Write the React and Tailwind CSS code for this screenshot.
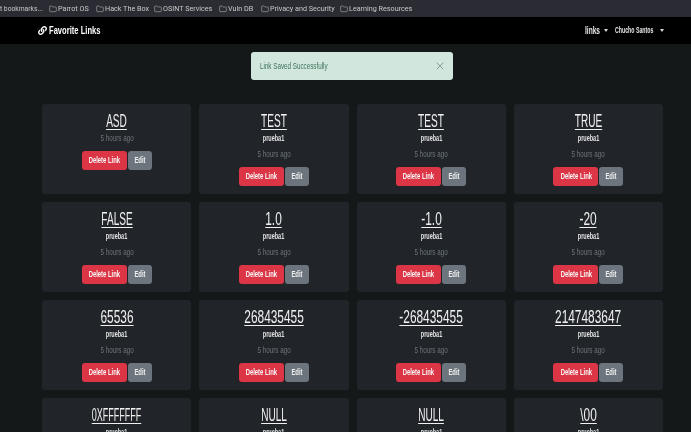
import { Folder, X } from 'lucide-react';
import { FaLink } from 'react-icons/fa';

const BOOKMARKS = [
  { name: 'Parrot OS', w: 'w-[32px]' },
  { name: 'Hack The Box', w: 'w-[43px]' },
  { name: 'OSINT Services', w: 'w-[50px]' },
  { name: 'Vuln DB', w: 'w-[27px]' },
  { name: 'Privacy and Security', w: 'w-[64px]' },
  { name: 'Learning Resources', w: 'w-[62px]' },
];

const LINKS = [
  { title: 'ASD', noDesc: true, sx: 'scale-x-[0.56]' },
  { title: 'TEST', sx: 'scale-x-[0.56]' },
  { title: 'TEST', sx: 'scale-x-[0.56]' },
  { title: 'TRUE', sx: 'scale-x-[0.56]' },
  { title: 'FALSE', sx: 'scale-x-[0.56]' },
  { title: '1.0', sx: 'scale-x-[0.66]' },
  { title: '-1.0', sx: 'scale-x-[0.66]' },
  { title: '-20', sx: 'scale-x-[0.66]' },
  { title: '65536', sx: 'scale-x-[0.66]' },
  { title: '268435455', sx: 'scale-x-[0.66]' },
  { title: '-268435455', sx: 'scale-x-[0.66]' },
  { title: '2147483647', sx: 'scale-x-[0.66]' },
  { title: '0XFFFFFFF', sx: 'scale-x-[0.5]' },
  { title: 'NULL', sx: 'scale-x-[0.56]' },
  { title: 'NULL', sx: 'scale-x-[0.56]' },
  { title: '\\00', sx: 'scale-x-[0.66]' },
];

function Cond({ children, className = 'scale-x-[0.66]' }) {
  return <span className={`inline-block whitespace-nowrap ${className}`}>{children}</span>;
}

function CondLeft({ children, className = 'scale-x-[0.66]' }) {
  return <span className={`block origin-left whitespace-nowrap ${className}`}>{children}</span>;
}

function Caret() {
  return <span className="inline-block border-x-[2.5px] border-t-[3px] border-x-transparent border-t-[#d8d8d8]" />;
}

function LinkCard({ title, noDesc, sx }) {
  return (
    <div className="h-[90px] rounded-[3px] bg-[#212529] pt-[7px] text-center">
      <h3 className="h-[20px] text-[18px] leading-[20px] text-[#f0f0f0]">
        <Cond className={`underline decoration-1 underline-offset-2 ${sx}`}>{title}</Cond>
      </h3>
      {!noDesc && (
        <p className="mb-[3px] h-[13px] text-[9.5px] leading-[13px] font-bold text-[#e2e2e2]">
          <Cond className="scale-x-[0.58]">prueba1</Cond>
        </p>
      )}
      <p className="mb-[7px] h-[13px] text-[9.5px] leading-[13px] text-[#6c757d]">
        <Cond>5 hours ago</Cond>
      </p>
      <div className="flex justify-center gap-[1px]">
        <button className="flex h-[19px] w-[45px] items-center justify-center rounded-[3px] bg-[#dc3545] text-[9.5px] font-bold text-[#f8f8f8]">
          <Cond className="scale-x-[0.62]">Delete Link</Cond>
        </button>
        <button className="flex h-[19px] w-[24px] items-center justify-center rounded-[3px] bg-[#6c757d] text-[9.5px] font-bold text-[#f0f0f0]">
          <Cond className="scale-x-[0.62]">Edit</Cond>
        </button>
      </div>
    </div>
  );
}

export default function App() {
  return (
    <div className="h-[432px] w-[691px] overflow-hidden bg-[#141819] font-['Liberation_Sans',sans-serif] blur-[0.3px]">
      {/* Bookmarks bar */}
      <div className="flex h-[17px] items-center gap-[6px] overflow-hidden bg-[#2b2b33] font-['Roboto',sans-serif] text-[8px] text-[#c9c9c9]">
        <span className="block w-[43px] shrink-0 origin-left scale-x-[0.84] whitespace-nowrap">t bookmarks...</span>
        {BOOKMARKS.map((b) => (
          <span key={b.name} className="flex shrink-0 items-center gap-[1px]">
            <Folder size={8} strokeWidth={1.5} />
            <span className={`${b.w} block origin-left scale-x-[0.9] whitespace-nowrap`}>{b.name}</span>
          </span>
        ))}
      </div>

      {/* Navbar */}
      <nav className="flex h-[27px] items-center bg-black pl-[38px] text-[#e8e8e8]">
        <FaLink size={9} className="text-white" />
        <span className="ml-[2px] w-[536px] text-[11.5px] font-bold text-white">
          <CondLeft>Favorite Links</CondLeft>
        </span>
        <span className="w-[19px] text-[10px] font-bold">
          <CondLeft>links</CondLeft>
        </span>
        <Caret />
        <span className="ml-[7px] w-[45px] text-[9.5px] font-bold">
          <CondLeft className="scale-x-[0.55]">Chucho Santos</CondLeft>
        </span>
        <Caret />
      </nav>

      {/* Alert */}
      <div className="mt-[8px] ml-[251px] flex h-[28px] w-[202px] items-center justify-between rounded-[3px] bg-[#d1e7dd] pr-[7px] pl-[9px] text-[9.5px] text-[#3d7058]">
        <CondLeft>Link Saved Successfully</CondLeft>
        <X size={12} strokeWidth={1.5} className="text-[#6f807a]" />
      </div>

      {/* Cards */}
      <div className="mt-[24px] mr-[28px] ml-[42px] grid grid-cols-4 gap-[8px]">
        {LINKS.map((l, i) => (
          <LinkCard key={i} title={l.title} noDesc={l.noDesc} sx={l.sx} />
        ))}
      </div>
    </div>
  );
}
